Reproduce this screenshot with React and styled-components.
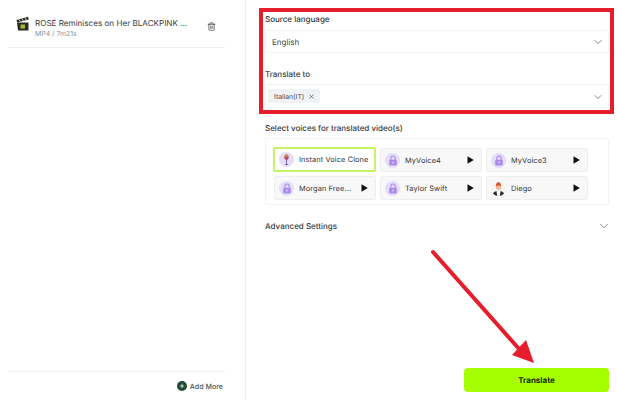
import React from 'react'
import styled, { createGlobalStyle } from 'styled-components'
import { ChevronDown, Trash2, X, Plus } from 'lucide-react'

const Global = createGlobalStyle`
  html, body {
    margin: 0;
    padding: 0;
    background: #fff;
  }
  * {
    box-sizing: border-box;
  }
`

const Page = styled.div`
  position: relative;
  display: flex;
  width: 617px;
  height: 400px;
  overflow: hidden;
  background: #fff;
  font-family: "Inter", "Liberation Sans", sans-serif;
  text-rendering: geometricPrecision;
  color: #33363b;
`

const Sidebar = styled.aside`
  display: flex;
  flex-direction: column;
  width: 246px;
  padding: 0 20px 0 8px;
  border-right: 1px solid #ededed;
`

const FileRow = styled.div`
  display: flex;
  align-items: flex-start;
  height: 48px;
  padding: 16px 0 0 8px;
  border-bottom: 1px solid #f0f0f0;
`

const FileInfo = styled.div`
  flex: 1;
  margin: 1px 0 0 5px;
  min-width: 0;
`

const FileName = styled.div`
  font-size: 8.1px;
  line-height: 12px;
  color: #3a3d42;
  white-space: nowrap;
`

const FileMeta = styled.div`
  margin-top: -1px;
  font-size: 6.9px;
  line-height: 11px;
  color: #8d9196;
`

const Trash = styled.div`
  display: flex;
  margin: 6px 9px 0 0;
  color: #3c3f44;
`

const Spacer = styled.div`
  flex: 1;
`

const SideFooter = styled.div`
  display: flex;
  justify-content: flex-end;
  align-items: center;
  gap: 3px;
  height: 29px;
  padding: 0 2px 0 0;
  border-top: 1px solid #f0f0f0;
  font-size: 7.1px;
  font-weight: 500;
  color: #4a5550;
`

const AddIcon = styled.span`
  display: flex;
  align-items: center;
  justify-content: center;
  width: 10px;
  height: 10px;
  border-radius: 50%;
  background: #1f4a34;
  color: #fff;
`

const Main = styled.main`
  display: flex;
  flex-direction: column;
  flex: 1;
  padding: 12px 8px 8px 19px;
`

const Label = styled.div`
  height: 12px;
  font-size: 8px;
  font-weight: 450;
  line-height: 14px;
  color: #36393e;
`

const Select = styled.div`
  display: flex;
  align-items: center;
  justify-content: space-between;
  height: ${({ tall }) => (tall ? '24px' : '23px')};
  margin: ${({ tall }) => (tall ? '5px' : '6px')} 0 14px;
  padding: 1px 4px 0 ${({ tall }) => (tall ? '2px' : '6px')};
  border: 1px solid #f3f3f3;
  border-radius: 2px;
  font-size: 8px;
  color: #43464b;
`

const Tag = styled.span`
  display: inline-flex;
  align-items: center;
  gap: 4px;
  height: 14px;
  margin-top: -1px;
  padding: 0 5px 0 6px;
  border-radius: 2px;
  background: #f1f2f4;
  font-size: 6.8px;
  color: #4b4e53;
`

const VoicesLabel = styled(Label)`
  margin-top: -1px;
`

const VoicePanel = styled.div`
  display: grid;
  grid-template-columns: 102px 102px 102px;
  grid-auto-rows: 24px;
  gap: 4px 4px;
  height: 67px;
  margin-top: 5px;
  padding: 9px 0 0 8px;
  border: 1px solid #f3f3f3;
  border-radius: 2px;
`

const VoiceCard = styled.div`
  display: flex;
  align-items: center;
  margin: ${({ selected }) => (selected ? '-1px 0 0 -1px' : '0')};
  padding: 0 7px 0 4px;
  border: ${({ selected }) => (selected ? '2px solid #c4f566' : '1px solid #eeeeee')};
  border-radius: 2px;
  background: ${({ selected }) => (selected ? '#fff' : '#f8f8f8')};
`

const VoiceName = styled.span`
  flex: 1;
  margin-left: 5px;
  font-size: 7.4px;
  font-weight: 400;
  letter-spacing: 0.1px;
  color: #33353a;
  white-space: nowrap;
`

const Avatar = styled.span`
  display: flex;
  align-items: center;
  justify-content: center;
  flex: none;
  width: 15px;
  height: 15px;
  border-radius: 50%;
  overflow: hidden;
  background: ${({ plain }) => (plain ? '#f4f4f4' : '#e6dcfa')};
`

const AdvancedRow = styled.div`
  display: flex;
  align-items: center;
  justify-content: space-between;
  height: 12px;
  margin: 15px -2px 0 0;
  font-size: 8px;
  font-weight: 450;
  line-height: 15px;
  color: #3a3d42;
`

const TranslateButton = styled.button`
  align-self: flex-end;
  width: 145px;
  height: 24px;
  margin-top: auto;
  padding: 0;
  border: 0;
  border-radius: 4px;
  background: #a6ff00;
  font-family: inherit;
  text-rendering: inherit;
  font-size: 8px;
  font-weight: 700;
  color: #1d2a10;
`

const Highlight = styled.div`
  position: absolute;
  left: 259px;
  top: 8px;
  width: 355px;
  height: 106px;
  border: 4px solid #e61e2b;
`

const ArrowOverlay = styled.svg`
  position: absolute;
  left: 420px;
  top: 240px;
`

const Clapper = () => (
  <svg width="14" height="15" viewBox="0 0 14 15">
    <path d="M1 6.5L2 14.5H12.5V6.5Z" fill="#2b2b26" />
    <path d="M4.5 8.5H9V12.5H4.5Z" fill="#a9b833" />
    <path d="M0.5 4L12 0.8L12.8 3.4L1.2 6.6Z" fill="#2b2b26" />
    <path d="M3 3.4L4.4 5.7M6 2.6L7.4 4.9M9 1.8L10.4 4.1" stroke="#e5e5e5" strokeWidth="0.9" />
  </svg>
)

const Lock = () => (
  <svg width="10" height="11" viewBox="0 0 10 11">
    <path d="M2.8 5V3.2a2.2 2.2 0 0 1 4.4 0V5" fill="none" stroke="#a98be8" strokeWidth="1.1" />
    <rect x="1.2" y="4.8" width="7.6" height="5.6" rx="1" fill="#a98be8" />
    <circle cx="5" cy="7.6" r="0.8" fill="#efe9fc" />
  </svg>
)

const Mic = () => (
  <svg width="11" height="13" viewBox="0 0 11 13">
    <rect x="3.4" y="1" width="4.2" height="5.6" rx="2.1" fill="#c2a24a" />
    <path d="M3.4 3.6h4.2v1.2a2.1 2.1 0 0 1-4.2 0Z" fill="#b04a6a" />
    <path d="M5.5 7v4" stroke="#7a68a0" strokeWidth="1" />
    <path d="M4 11.5h3" stroke="#7a68a0" strokeWidth="1" />
  </svg>
)

const Person = () => (
  <svg width="15" height="15" viewBox="0 0 15 15">
    <path d="M1.500 15c0-3.400 2-5 6-5s6 1.600 6 5Z" fill="#26282b" />
    <path d="M5.500 10h4L8.800 15H6.200Z" fill="#fff" />
    <circle cx="7.500" cy="6.200" r="2.600" fill="#f0b79c" />
    <path d="M4.900 5.400C4.700 2.400 6 1.200 7.500 1.200s2.800 1.200 2.600 4.200C9 4.200 6 4.200 4.900 5.400Z" fill="#d9532c" />
  </svg>
)

const Play = () => (
  <svg width="7" height="8" viewBox="0 0 7 8">
    <path d="M0.500 0.300L6.800 4L0.500 7.700Z" fill="#111" />
  </svg>
)

const voices = [
  { name: 'Instant Voice Clone', avatar: <Mic />, selected: true },
  { name: 'MyVoice4', avatar: <Lock />, play: true },
  { name: 'MyVoice3', avatar: <Lock />, play: true },
  { name: 'Morgan Free...', avatar: <Lock />, play: true },
  { name: 'Taylor Swift', avatar: <Lock />, play: true },
  { name: 'Diego', avatar: <Person />, plain: true, play: true },
]

export default function App() {
  return (
    <Page>
      <Global />
      <Sidebar>
        <FileRow>
          <Clapper />
          <FileInfo>
            <FileName>ROSÉ Reminisces on Her BLACKPINK ...</FileName>
            <FileMeta>MP4 / 7m21s</FileMeta>
          </FileInfo>
          <Trash>
            <Trash2 size={9} />
          </Trash>
        </FileRow>
        <Spacer />
        <SideFooter>
          <AddIcon>
            <Plus size={6} strokeWidth={3} />
          </AddIcon>
          Add More
        </SideFooter>
      </Sidebar>
      <Main>
        <Label>Source language</Label>
        <Select>
          English
          <ChevronDown size={12} strokeWidth={1.5} color="#55585d" />
        </Select>
        <Label>Translate to</Label>
        <Select tall>
          <Tag>
            Italian(IT)
            <X size={7} color="#333" />
          </Tag>
          <ChevronDown size={12} strokeWidth={1.5} color="#55585d" />
        </Select>
        <VoicesLabel>Select voices for translated video(s)</VoicesLabel>
        <VoicePanel>
          {voices.map(({ name, avatar, selected, plain, play }) => (
            <VoiceCard key={name} selected={selected}>
              <Avatar plain={plain}>{avatar}</Avatar>
              <VoiceName>{name}</VoiceName>
              {play && <Play />}
            </VoiceCard>
          ))}
        </VoicePanel>
        <AdvancedRow>
          Advanced Settings
          <ChevronDown size={14} strokeWidth={1.2} color="#55585d" />
        </AdvancedRow>
        <TranslateButton>Translate</TranslateButton>
      </Main>
      <Highlight />
      <ArrowOverlay width="197" height="160" viewBox="0 0 197 160">
        <path d="M13 12L100 110" stroke="#e61e2b" strokeWidth="4" strokeLinecap="round" />
        <path d="M114 123L92 115L106 100Z" fill="#e61e2b" />
      </ArrowOverlay>
    </Page>
  )
}
